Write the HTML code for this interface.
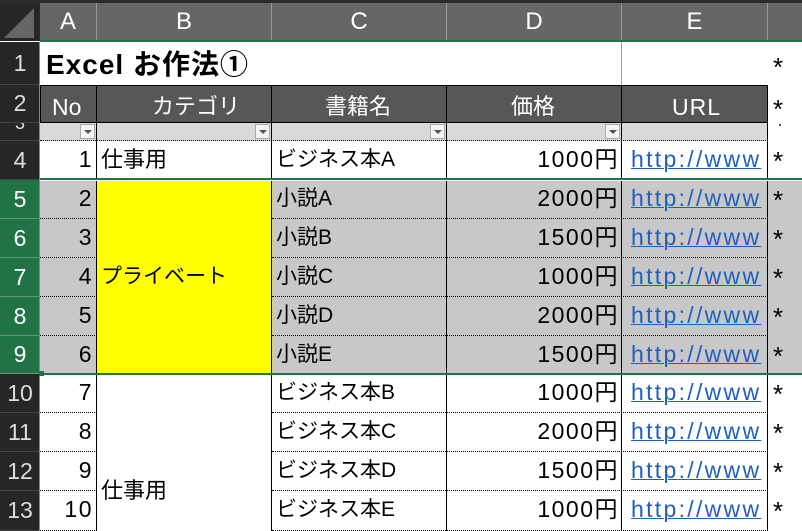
<!DOCTYPE html>
<html><head><meta charset="utf-8"><style>
*{margin:0;padding:0;box-sizing:border-box}
body{width:802px;height:531px;overflow:hidden;background:#fff;position:relative;font-family:"Liberation Sans","Noto Sans CJK JP",sans-serif}
.a{position:absolute}
.t{position:absolute;font-size:21px;line-height:1;color:#000;white-space:nowrap}
.n{font-size:23px;letter-spacing:1.5px;top:auto}
.rh{position:absolute;left:0;width:40px;background:#262626;color:#ddd;font-size:23px;display:flex;align-items:center;justify-content:center;border-bottom:1px solid #444}
.rh.s{background:#217346;color:#fff;border-bottom:1px solid #5a9a78}
.ch{position:absolute;top:3px;height:38px;background:#666;color:#fff;font-size:24px;display:flex;align-items:center;justify-content:center;border-right:1px solid #999}
.dot{position:absolute;height:0;border-top:1px dotted #000}
.fb{position:absolute;width:15px;height:15px;background:#f4f4f4;border:1px solid #aaa}
.fb:after{content:"";position:absolute;left:3px;top:5px;border-left:4px solid transparent;border-right:4px solid transparent;border-top:4px solid #555}
.u{color:#1f5fbf;text-decoration:underline;text-decoration-thickness:1px;font-size:23px;letter-spacing:2.3px}
.st{position:absolute;left:773px;font-size:26px;line-height:1;color:#000}
</style></head><body>
<div class="a" style="left:0;top:0;width:802px;height:41px;background:#2b2b2b"></div>
<div class="a" style="left:0;top:3px;width:39px;height:38px;background:#262626"></div>
<div class="a" style="left:4px;top:8px;width:0;height:0;border-left:30px solid transparent;border-bottom:30px solid #666"></div>
<div class="ch" style="left:40px;width:57px">A</div>
<div class="ch" style="left:97px;width:175px">B</div>
<div class="ch" style="left:272px;width:175px">C</div>
<div class="ch" style="left:447px;width:175px">D</div>
<div class="ch" style="left:622px;width:146px">E</div>
<div class="ch" style="left:768px;width:34px;border-right:none"></div>
<div class="a" style="left:40px;top:40px;width:762px;height:2px;background:#217346"></div>
<div class="rh" style="top:42px;height:43px">1</div>
<div class="rh" style="top:85px;height:38px">2</div>
<div class="rh" style="top:123px;height:18px;font-size:18px;align-items:flex-end;overflow:hidden"><span style="position:relative;top:-6px">3</span></div>
<div class="rh" style="top:141px;height:39px">4</div>
<div class="rh s" style="top:180px;height:39px">5</div>
<div class="rh s" style="top:219px;height:39px">6</div>
<div class="rh s" style="top:258px;height:39px">7</div>
<div class="rh s" style="top:297px;height:39px">8</div>
<div class="rh s" style="top:336px;height:38px">9</div>
<div class="rh" style="top:374px;height:39px">10</div>
<div class="rh" style="top:413px;height:39px">11</div>
<div class="rh" style="top:452px;height:39px">12</div>
<div class="rh" style="top:491px;height:40px">13</div>
<div class="a" style="left:39px;top:42px;width:1px;height:489px;background:#888"></div>
<div class="t" style="left:46px;top:51px;font-size:28px;font-weight:bold;letter-spacing:1px">Excel お作法①</div>
<div class="a" style="left:621px;top:42px;width:1px;height:43px;background:#a0a0a0"></div>
<div class="a" style="left:40px;top:85px;width:728px;height:38px;background:#575757;border:1px solid #000"></div>
<div class="a" style="left:96px;top:85px;width:1px;height:56px;background:#000"></div>
<div class="a" style="left:271px;top:85px;width:1px;height:56px;background:#000"></div>
<div class="a" style="left:446px;top:85px;width:1px;height:56px;background:#000"></div>
<div class="a" style="left:621px;top:85px;width:1px;height:56px;background:#000"></div>
<div class="t" style="left:52px;top:96px;color:#fff;font-size:23px">No</div>
<div class="t" style="left:152px;top:96px;color:#fff;font-size:22px">カテゴリ</div>
<div class="t" style="left:325px;top:96px;color:#fff;font-size:22px">書籍名</div>
<div class="t" style="left:511px;top:96px;color:#fff;font-size:22px">価格</div>
<div class="t" style="left:672px;top:96px;color:#fff;font-size:23px;letter-spacing:1px">URL</div>
<div class="a" style="left:40px;top:123px;width:728px;height:18px;background:#d9d9d9"></div>
<div class="a" style="left:96px;top:123px;width:1px;height:18px;background:#000"></div>
<div class="a" style="left:271px;top:123px;width:1px;height:18px;background:#000"></div>
<div class="a" style="left:446px;top:123px;width:1px;height:18px;background:#000"></div>
<div class="a" style="left:621px;top:123px;width:1px;height:18px;background:#000"></div>
<div class="fb" style="left:80px;top:124px"></div>
<div class="fb" style="left:255px;top:124px"></div>
<div class="fb" style="left:430px;top:124px"></div>
<div class="fb" style="left:605px;top:124px"></div>
<div class="dot" style="left:40px;top:140px;width:728px"></div>
<div class="a" style="left:40px;top:181px;width:762px;height:193px;background:#c8c8c8"></div>
<div class="a" style="left:97px;top:181px;width:174px;height:193px;background:#ffff00"></div>
<div class="a" style="left:96px;top:141px;width:1px;height:390px;background:#000"></div>
<div class="a" style="left:271px;top:141px;width:1px;height:390px;background:#000"></div>
<div class="a" style="left:446px;top:141px;width:1px;height:390px;background:#000"></div>
<div class="a" style="left:621px;top:141px;width:1px;height:390px;background:#000"></div>
<div class="a" style="left:767px;top:85px;width:1px;height:446px;background:#000"></div>
<div class="dot" style="left:40px;top:218px;width:57px"></div><div class="dot" style="left:272px;top:218px;width:496px"></div>
<div class="dot" style="left:40px;top:257px;width:57px"></div><div class="dot" style="left:272px;top:257px;width:496px"></div>
<div class="dot" style="left:40px;top:296px;width:57px"></div><div class="dot" style="left:272px;top:296px;width:496px"></div>
<div class="dot" style="left:40px;top:335px;width:57px"></div><div class="dot" style="left:272px;top:335px;width:496px"></div>
<div class="dot" style="left:40px;top:412px;width:57px"></div><div class="dot" style="left:272px;top:412px;width:496px"></div>
<div class="dot" style="left:40px;top:451px;width:57px"></div><div class="dot" style="left:272px;top:451px;width:496px"></div>
<div class="dot" style="left:40px;top:490px;width:57px"></div><div class="dot" style="left:272px;top:490px;width:496px"></div>
<div class="dot" style="left:40px;top:530px;width:57px"></div><div class="dot" style="left:272px;top:530px;width:496px"></div>
<div class="a" style="left:40px;top:178px;width:762px;height:2px;background:#217346"></div>
<div class="a" style="left:40px;top:180px;width:762px;height:1px;background:#fff"></div>
<div class="a" style="left:40px;top:373px;width:762px;height:2px;background:#217346"></div>
<div class="a" style="left:39px;top:371px;width:5px;height:5px;background:#217346"></div>

<div class="t n" style="right:709px;top:148px">1</div>
<div class="t" style="left:101px;top:149px;font-size:22px">仕事用</div>
<div class="t" style="left:276px;top:149px">ビジネス本A</div>
<div class="t n" style="right:183px;top:148px">1000円</div>
<div class="t u" style="left:631px;top:148px">http://www</div>

<div class="t n" style="right:709px;top:187px">2</div>
<div class="t" style="left:276px;top:188px">小説A</div>
<div class="t n" style="right:183px;top:187px">2000円</div>
<div class="t u" style="left:631px;top:187px">http://www</div>
<div class="t n" style="right:709px;top:226px">3</div>
<div class="t" style="left:276px;top:227px">小説B</div>
<div class="t n" style="right:183px;top:226px">1500円</div>
<div class="t u" style="left:631px;top:226px">http://www</div>
<div class="t n" style="right:709px;top:265px">4</div>
<div class="t" style="left:101px;top:266px">プライベート</div>
<div class="t" style="left:276px;top:266px">小説C</div>
<div class="t n" style="right:183px;top:265px">1000円</div>
<div class="t u" style="left:631px;top:265px">http://www</div>
<div class="t n" style="right:709px;top:304px">5</div>
<div class="t" style="left:276px;top:305px">小説D</div>
<div class="t n" style="right:183px;top:304px">2000円</div>
<div class="t u" style="left:631px;top:304px">http://www</div>
<div class="t n" style="right:709px;top:343px">6</div>
<div class="t" style="left:276px;top:344px">小説E</div>
<div class="t n" style="right:183px;top:343px">1500円</div>
<div class="t u" style="left:631px;top:343px">http://www</div>

<div class="t n" style="right:709px;top:381px">7</div>
<div class="t" style="left:276px;top:382px">ビジネス本B</div>
<div class="t n" style="right:183px;top:381px">1000円</div>
<div class="t u" style="left:631px;top:381px">http://www</div>
<div class="t n" style="right:709px;top:420px">8</div>
<div class="t" style="left:276px;top:421px">ビジネス本C</div>
<div class="t n" style="right:183px;top:420px">2000円</div>
<div class="t u" style="left:631px;top:420px">http://www</div>
<div class="t n" style="right:709px;top:459px">9</div>
<div class="t" style="left:276px;top:460px">ビジネス本D</div>
<div class="t n" style="right:183px;top:459px">1500円</div>
<div class="t u" style="left:631px;top:459px">http://www</div>
<div class="t n" style="right:709px;top:498px">10</div>
<div class="t" style="left:101px;top:480px;font-size:22px">仕事用</div>
<div class="t" style="left:276px;top:499px">ビジネス本E</div>
<div class="t n" style="right:183px;top:498px">1000円</div>
<div class="t u" style="left:631px;top:498px">http://www</div>

<div class="st" style="top:54px">*</div>
<div class="st" style="top:96px">*</div>
<div class="a" style="left:779px;top:124px;width:2px;height:2px;background:#555"></div>
<div class="st" style="top:148px">*</div>
<div class="st" style="top:187px">*</div>
<div class="st" style="top:226px">*</div>
<div class="st" style="top:265px">*</div>
<div class="st" style="top:304px">*</div>
<div class="st" style="top:343px">*</div>
<div class="st" style="top:381px">*</div>
<div class="st" style="top:420px">*</div>
<div class="st" style="top:459px">*</div>
<div class="st" style="top:498px">*</div>
</body></html>
